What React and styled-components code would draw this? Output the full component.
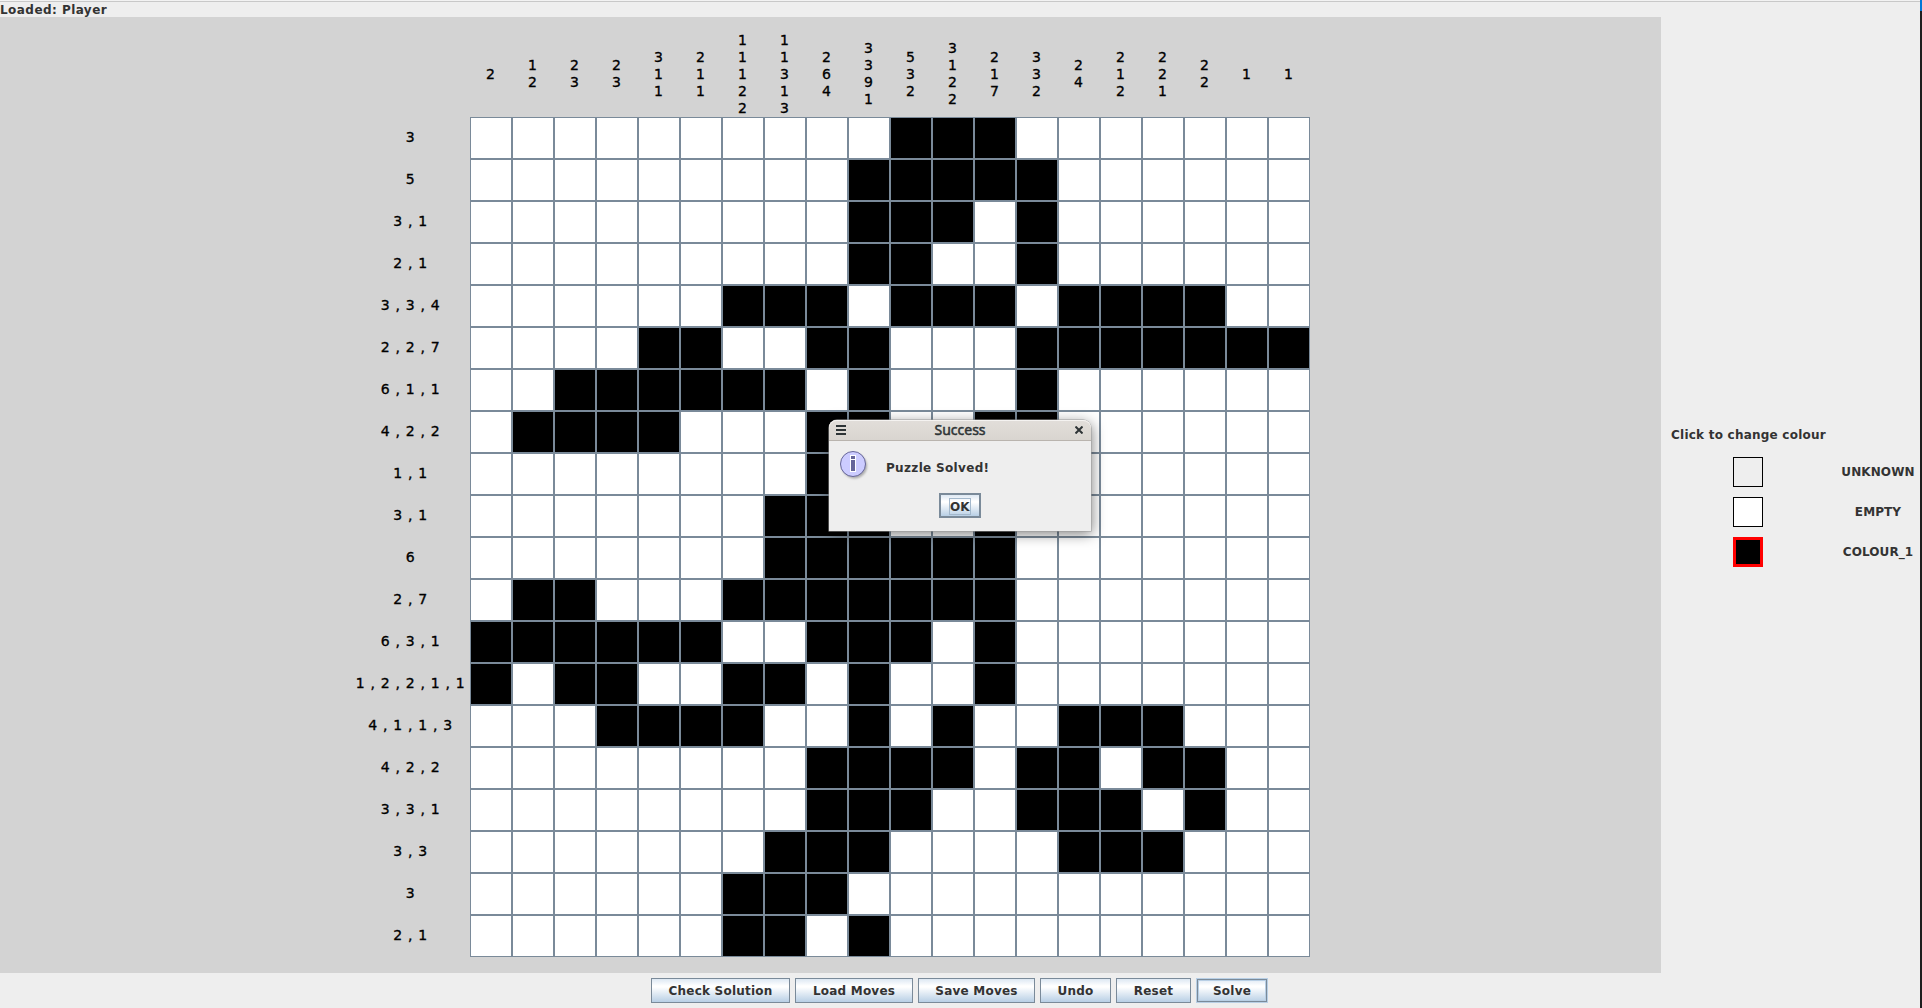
import React from "react";
import styled, { createGlobalStyle } from "styled-components";

const Global = createGlobalStyle`
  * { box-sizing: border-box; }
  html, body { margin: 0; padding: 0; overflow: hidden; background: #eee; }
  body { font-family: "DejaVu Sans", sans-serif; font-weight: bold; font-size: 12px; color: #333; }
`;

const Screen = styled.div`
  width: 1922px;
  height: 1008px;
  display: flex;
  position: relative;
`;
const Window = styled.div`
  width: 1920px;
  display: flex;
  flex-direction: column;
  background: #eee;
`;
const DesktopEdge = styled.div`
  width: 2px;
  background: linear-gradient(#0078d7 0 11px, #1e1e1e 11px);
`;
const Status = styled.header`
  height: 17px;
  line-height: 15px;
  border-top: 1px solid #f2f2f2;
  box-shadow: inset 0 1px #c8c8c8;
  padding-top: 2px;
  letter-spacing: 0.45px;
`;
const Main = styled.main`
  height: 956px;
  display: flex;
`;
const Board = styled.section`
  width: 1661px;
  background: #d3d3d3;
  display: grid;
  grid-template-columns: 122px 840px;
  grid-template-rows: 86px 840px;
  padding: 14px 0 0 348px;
  color: #000;
  font-size: 14px;
  font-weight: normal;
  -webkit-text-stroke: 0.35px #000;
`;
const ColumnHints = styled.div`
  grid-column: 2;
  display: flex;
`;
const ColumnHint = styled.div`
  width: 42px;
  display: flex;
  flex-direction: column;
  justify-content: center;
  align-items: center;
  line-height: 17px;
  padding-right: 1px;
`;
const RowHints = styled.div`
  display: flex;
  flex-direction: column;
`;
const RowHint = styled.div`
  height: 42px;
  display: flex;
  justify-content: center;
  align-items: center;
  white-space: pre;
  letter-spacing: 0.68px;
  padding: 0 0 2px 3px;
`;
const Grid = styled.div`
  display: grid;
  grid-template-columns: repeat(20, 42px);
  grid-auto-rows: 42px;
`;
const Cell = styled.div`
  border: 1px solid #7a8a99;
  background: ${(p) => (p.$filled ? "#000" : "#fff")};
`;
const Palette = styled.aside`
  width: 259px;
  display: flex;
  flex-direction: column;
  padding: 408px 0 0 10px;
`;
const PaletteTitle = styled.div`
  line-height: 20px;
  height: 32px;
  letter-spacing: 0.23px;
`;
const PaletteRow = styled.div`
  height: 40px;
  display: grid;
  grid-template-columns: 62px 30px 1fr;
  align-items: start;
`;
const Swatch = styled.div`
  grid-column: 2;
  width: 30px;
  height: 30px;
  background: ${(p) => p.$fill};
  border: ${(p) => (p.$selected ? "3px solid #f00" : "1px solid #000")};
`;
const SwatchName = styled.div`
  width: 90px;
  margin-left: 70px;
  text-align: center;
  line-height: 30px;
  letter-spacing: 0.1px;
`;
const Toolbar = styled.footer`
  height: 35px;
  display: flex;
  justify-content: center;
  gap: 5px;
  padding: 5px 1px 0 0;
`;
const Button = styled.button`
  width: ${(p) => p.$w}px;
  height: 25px;
  padding: 0;
  font: inherit;
  letter-spacing: 0.22px;
  color: #333;
  border: ${(p) => (p.$default ? "2px" : "1px")} solid ${(p) => (p.$focused ? "#b8cfe5" : "#7a8a99")};
  box-shadow: ${(p) => (p.$focused ? "inset 0 0 0 1px #7a8a99, inset 0 0 0 2px #b8cfe5" : "none")};
  background: linear-gradient(#dde8f3 0%, #fff 30%, #fff 35%, #b8cfe5 100%);
`;
const FocusLabel = styled.span`
  display: inline-block;
  width: 22px;
  height: 17px;
  line-height: 16px;
  letter-spacing: 0;
  border: 1px solid #a3b8cc;
  vertical-align: top;
  margin-top: 1px;
  text-indent: -0.5px;
  white-space: nowrap;
`;
const Dialog = styled.div`
  position: absolute;
  left: 829px;
  top: 420px;
  width: 262px;
  height: 111px;
  display: flex;
  flex-direction: column;
  border-radius: 8px 8px 0 0;
  background: #eee;
  box-shadow: 0 0 0 0.5px #999, 1px 3px 14px rgba(0, 0, 0, 0.5);
`;
const TitleBar = styled.div`
  height: 21px;
  display: grid;
  grid-template-columns: 24px 1fr 24px;
  place-items: center;
  border-radius: 8px 8px 0 0;
  border-bottom: 1px solid #b9b4ae;
  background: linear-gradient(#e2deda, #d9d5d0);
  box-shadow: inset 0 1px #f5f3f1;
  color: #2e3436;
  font: normal 14px/20px "Noto Sans", sans-serif;
  -webkit-text-stroke: 0.5px #2e3436;
`;
const Message = styled.div`
  height: 52px;
  display: flex;
  align-items: flex-start;
  padding: 10px 0 0 10px;
`;
const MessageText = styled.span`
  padding-left: 15px;
  line-height: 34px;
  letter-spacing: 0.33px;
`;
const Actions = styled.div`
  display: flex;
  justify-content: center;
`;

const COLS = ["2", "1 2", "2 3", "2 3", "3 1 1", "2 1 1", "1 1 1 2 2", "1 1 3 1 3", "2 6 4", "3 3 9 1", "5 3 2", "3 1 2 2", "2 1 7", "3 3 2", "2 4", "2 1 2", "2 2 1", "2 2", "1", "1"];
const ROWS = ["3", "5", "3,1", "2,1", "3,3,4", "2,2,7", "6,1,1", "4,2,2", "1,1", "3,1", "6", "2,7", "6,3,1", "1,2,2,1,1", "4,1,1,3", "4,2,2", "3,3,1", "3,3", "3", "2,1"];
const SOLUTION = [
  "..........###.......",
  ".........#####......",
  ".........###.#......",
  ".........##..#......",
  "......###.###.####..",
  "....##..##...#######",
  "..######.#...#......",
  ".####...##..##......",
  "........#...#.......",
  ".......###..#.......",
  ".......######.......",
  ".##...#######.......",
  "######..###.#.......",
  "#.##..##.#..#.......",
  "...####..#.#..###...",
  "........####.##.##..",
  "........###..###.#..",
  ".......###....###...",
  "......###...........",
  "......##.#..........",
];

const InfoIcon = () => (
  <svg width="32" height="32" viewBox="0 0 32 32">
    <defs>
      <filter id="soft" x="-20%" y="-20%" width="150%" height="150%">
        <feGaussianBlur stdDeviation="1" />
      </filter>
    </defs>
    <circle cx="15.5" cy="15" r="12.5" fill="#aaa" filter="url(#soft)" />
    <circle cx="14" cy="13" r="12.5" fill="#ccf" stroke="#669" />
    <path d="M11 4h6v17h-6z" fill="#fff" />
    <path d="M12 5h4v3h-4zM12 9h4v11h-4z" fill="#669" />
  </svg>
);

export default function App() {
  return (
    <Screen>
      <Global />
      <Window>
        <Status>Loaded: Player</Status>
        <Main>
          <Board>
            <ColumnHints>
              {COLS.map((c, i) => (
                <ColumnHint key={i}>{c.split(" ").map((n, j) => <span key={j}>{n}</span>)}</ColumnHint>
              ))}
            </ColumnHints>
            <RowHints>
              {ROWS.map((r, i) => <RowHint key={i}>{r.split(",").join(" , ")}</RowHint>)}
            </RowHints>
            <Grid>
              {SOLUTION.flatMap((row, y) => [...row].map((c, x) => <Cell key={`${y}-${x}`} $filled={c === "#"} />))}
            </Grid>
          </Board>
          <Palette>
            <PaletteTitle>Click to change colour</PaletteTitle>
            <PaletteRow><Swatch $fill="#eee" /><SwatchName>UNKNOWN</SwatchName></PaletteRow>
            <PaletteRow><Swatch $fill="#fff" /><SwatchName>EMPTY</SwatchName></PaletteRow>
            <PaletteRow><Swatch $fill="#000" $selected /><SwatchName>COLOUR_1</SwatchName></PaletteRow>
          </Palette>
        </Main>
        <Toolbar>
          <Button $w={139}>Check Solution</Button>
          <Button $w={118}>Load Moves</Button>
          <Button $w={117}>Save Moves</Button>
          <Button $w={71}>Undo</Button>
          <Button $w={75}>Reset</Button>
          <Button $w={72} $focused>Solve</Button>
        </Toolbar>
      </Window>
      <DesktopEdge />
      <Dialog>
        <TitleBar>
          <svg width="10" height="10"><path d="M0 1h10M0 5h10M0 9h10" stroke="#2e3436" strokeWidth="2" /></svg>
          <span>Success</span>
          <svg width="8" height="8"><path d="M0.5 0.5l7 7M7.5 0.5l-7 7" stroke="#2e3436" strokeWidth="2" /></svg>
        </TitleBar>
        <Message>
          <InfoIcon />
          <MessageText>Puzzle Solved!</MessageText>
        </Message>
        <Actions><Button $w={42} $default><FocusLabel>OK</FocusLabel></Button></Actions>
      </Dialog>
    </Screen>
  );
}
